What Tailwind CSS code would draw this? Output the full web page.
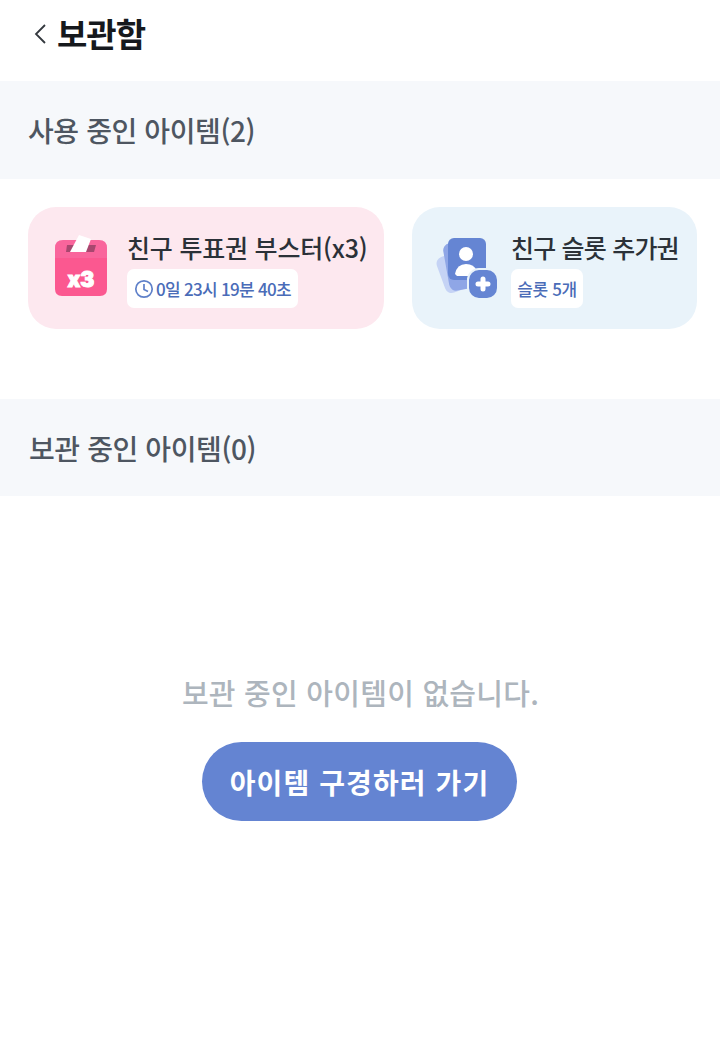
<!DOCTYPE html>
<html lang="ko">
<head>
<meta charset="utf-8">
<script src="https://cdn.jsdelivr.net/npm/@tailwindcss/browser@4"></script>
</head>
<body class="bg-white font-['Noto_Sans_CJK_KR','Noto_Sans',sans-serif]">
<div class="w-[720px] h-[1063px] overflow-hidden flex flex-col">
  <header class="h-[81px] flex items-start pl-[33px] pt-[11px] gap-[9px]">
    <svg class="mt-[12px]" width="15" height="22" viewBox="0 0 15 22" fill="none" stroke="#33383e" stroke-width="1.8"><path d="M12 2 L3 11 L12 20"/></svg>
    <h1 class="text-[33px] leading-[44px] font-bold text-[#16191d] tracking-[-1px]">보관함</h1>
  </header>
  <section class="h-[98px] bg-[#f6f8fb] flex items-center pl-[28px]">
    <h2 class="text-[28px] leading-[40px] font-medium text-[#4e5661] tracking-[-0.4px]">사용 중인 아이템(2)</h2>
  </section>
  <div class="flex gap-[28px] pl-[28px] pt-[28px] h-[220px]">
    <div class="w-[356px] h-[122px] rounded-[28px] bg-[#fde8ef] flex items-center pl-[26px]">
      <svg width="54" height="62" viewBox="0 0 54 62" class="mr-[19px] shrink-0 mt-[-4px]">
        <path d="M1 13 Q1 5 9 5 H45 Q53 5 53 13 V24 H1 Z" fill="#f9659c"/>
        <path d="M13 10 H42 L40 17 H12 Z" fill="#a8476f"/>
        <path d="M25 0 L37 4 L32 17 H16 Z" fill="#ffffff"/>
        <path d="M1 23 H53 V54 Q53 61 46 61 H8 Q1 61 1 54 Z" fill="#fb5890"/>
        <text x="27" y="52" text-anchor="middle" font-family="Inter, sans-serif" font-weight="900" font-size="21" fill="#fff" stroke="#fff" stroke-width="1">x3</text>
      </svg>
      <div class="flex flex-col items-start">
        <div class="text-[25px] leading-[38px] font-medium text-[#2b3138] tracking-[-0.2px] whitespace-nowrap">친구 투표권 부스터(x3)</div>
        <div class="mt-[3px] h-[39px] w-[171px] rounded-[7px] bg-white flex items-center pl-[7px] gap-[2px]">
          <svg width="20" height="20" viewBox="0 0 20 20" fill="none" stroke="#5f80c9" stroke-width="1.7"><circle cx="10" cy="10" r="8.2"/><path d="M10 5 V10.5 L14 12.5"/></svg>
          <span class="text-[17px] leading-[26px] font-medium text-[#4a6cb8] tracking-[-0.7px] whitespace-nowrap">0일 23시 19분 40초</span>
        </div>
      </div>
    </div>
    <div class="w-[285px] h-[122px] rounded-[28px] bg-[#e9f3fa] flex items-center pl-[20px] shrink-0">
      <svg width="68" height="64" viewBox="0 0 68 64" class="mr-[11px] shrink-0">
        <rect x="8" y="16" width="36" height="38" rx="7" fill="#c5d3f5" transform="rotate(-20 26 35)"/>
        <rect x="14" y="5" width="36" height="48" rx="7" fill="#8fa6e6" transform="rotate(-10 32 29)"/>
        <rect x="16" y="2" width="38" height="42" rx="6" fill="#6585d3"/>
        <circle cx="34" cy="18" r="7" fill="#fff"/>
        <path d="M23 38 Q25 28 34 28 Q42 28 45 35 L40 40 H25 Z" fill="#fff"/>
        <rect x="36" y="33" width="30" height="30" rx="11" fill="#6585d3" stroke="#e9f3fa" stroke-width="2"/>
        <path d="M51 43 V53 M46 48 H56" stroke="#fff" stroke-width="5" stroke-linecap="round"/>
      </svg>
      <div class="flex flex-col items-start">
        <div class="text-[25px] leading-[38px] font-medium text-[#2b3138] tracking-[-0.8px] whitespace-nowrap">친구 슬롯 추가권</div>
        <div class="mt-[3px] h-[39px] w-[72px] rounded-[7px] bg-white flex items-center justify-center">
          <span class="text-[17px] leading-[26px] font-medium text-[#4a6cb8] tracking-[-0.4px] whitespace-nowrap">슬롯 5개</span>
        </div>
      </div>
    </div>
  </div>
  <section class="h-[97px] bg-[#f6f8fb] flex items-center pl-[28px]">
    <h2 class="text-[28px] leading-[40px] font-medium text-[#4e5661] tracking-[-0.4px] pl-[1px]">보관 중인 아이템(0)</h2>
  </section>
  <div class="flex flex-col items-center pt-[174px] pr-[1px]">
    <p class="text-[29px] leading-[44px] font-medium text-[#adb5bd] tracking-[0.25px] whitespace-nowrap pl-[2px]">보관 중인 아이템이 없습니다.</p>
    <button class="mt-[28px] w-[315px] h-[79px] rounded-full bg-[#6484d2] text-white text-[28px] font-bold leading-[40px] tracking-[1.1px] whitespace-nowrap">아이템 구경하러 가기</button>
  </div>
</div>
</body>
</html>
